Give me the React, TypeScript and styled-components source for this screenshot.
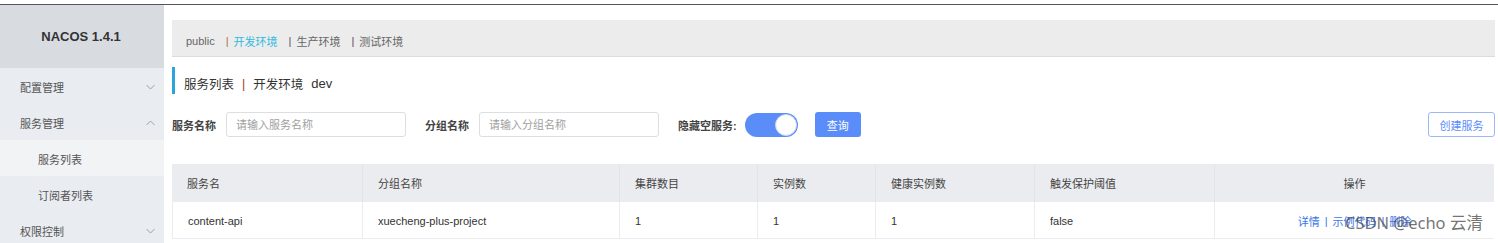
import React from "react";
import styled, { createGlobalStyle } from "styled-components";

const Global = createGlobalStyle`
  html, body { margin: 0; padding: 0; background: #fff; }
  body { font-family: "Liberation Sans", "Noto Sans CJK SC", sans-serif; color: #333; }
  * { box-sizing: border-box; }
`;

const Page = styled.div`
  padding-top: 4px;
  width: 1498px;
  height: 243px;
  overflow: hidden;
  position: relative;
`;

const Frame = styled.div`
  border-top: 1px solid #555;
  display: flex;
  height: 239px;
`;

const Sidebar = styled.aside`
  width: 164px;
  flex: none;
  background: #e9ecf0;
  display: flex;
  flex-direction: column;
`;

const Brand = styled.div`
  height: 63px;
  flex: none;
  background: #d8dce1;
  display: flex;
  align-items: center;
  justify-content: center;
  font-size: 13px;
  font-weight: 700;
  color: #333;
  padding-right: 2px;
  padding-bottom: 1px;
`;

const MenuItem = styled.div<{ $sub?: boolean; $active?: boolean }>`
  height: 36px;
  flex: none;
  display: flex;
  align-items: center;
  justify-content: space-between;
  padding: 1px 9px 0 ${(p) => (p.$sub ? "38px" : "20px")};
  font-size: 11px;
  color: #555;
  background: ${(p) => (p.$active ? "#f2f3f5" : "transparent")};
`;

const Chevron = ({ up }: { up?: boolean }) => (
  <svg width="9" height="6" viewBox="0 0 9 6">
    <path
      d={up ? "M0.5 5 L4.5 1 L8.5 5" : "M0.5 1 L4.5 5 L8.5 1"}
      fill="none"
      stroke="#999"
      strokeWidth="0.9"
    />
  </svg>
);

const Main = styled.main`
  flex: 1;
  padding: 15px 3px 0 8px;
  display: flex;
  flex-direction: column;
`;

const NsBar = styled.div`
  height: 37px;
  flex: none;
  background: #ececec;
  border-bottom: 1px solid #dcdcdc;
  display: flex;
  align-items: center;
  padding-left: 14px;
  padding-top: 5px;
  font-size: 11px;
`;

const NsItem = styled.span<{ $active?: boolean }>`
  color: ${(p) => (p.$active ? "#2dbbe0" : "#666")};
  margin-right: 11px;
`;

const NsSep = styled.span<{ $c: string }>`
  color: ${(p) => p.$c};
  margin-right: 5px;
`;

const TitleRow = styled.div`
  margin-top: 10px;
  height: 27px;
  flex: none;
  border-left: 3px solid #2ca3d9;
  display: flex;
  align-items: center;
  padding-left: 9px;
  padding-top: 6px;
  font-size: 12.5px;
  color: #333;
`;

const TitleSep = styled.span`
  color: #b03030;
  margin: 0 8px 0 8px;
`;

const Dev = styled.span`
  margin-left: 8px;
  font-size: 13px;
`;

const SearchRow = styled.div`
  margin-top: 18px;
  height: 25px;
  flex: none;
  display: flex;
  align-items: center;
`;

const Label = styled.span`
  font-size: 11px;
  font-weight: 700;
  color: #444;
  margin-right: 10px;
`;

const Input = styled.input`
  width: 180px;
  height: 25px;
  border: 1px solid #dcdee3;
  border-radius: 3px;
  padding: 0 9px;
  font-family: inherit;
  font-size: 11px;
  outline: none;
  margin-right: 19px;
  &::placeholder { color: #a0a0a0; }
`;

const Switch = styled.div`
  width: 53px;
  height: 24px;
  border-radius: 12px;
  background: #5b8df8;
  display: flex;
  align-items: center;
  justify-content: flex-end;
  padding-right: 1px;
  margin: 0 17px 0 -2px;
`;

const Knob = styled.div`
  width: 22px;
  height: 22px;
  border-radius: 50%;
  background: #fff;
  border: 1px solid #c9d6f8;
`;

const PrimaryBtn = styled.button`
  width: 46px;
  height: 25px;
  border: none;
  border-radius: 3px;
  background: #5a8cfa;
  color: #fff;
  font-family: inherit;
  font-size: 11px;
  padding: 0;
`;

const Spacer = styled.div`
  flex: 1;
`;

const OutlineBtn = styled.button`
  width: 67px;
  height: 25px;
  border: 1px solid #9db8f8;
  border-radius: 3px;
  background: #fff;
  color: #5a8cfa;
  font-family: inherit;
  font-size: 11px;
  padding: 0;
`;

const Table = styled.div`
  margin-top: 27px;
  width: 1322px;
  display: grid;
  grid-template-columns: 190px 257px 138px 118px 159px 180px 280px;
  font-size: 11px;
`;

const Th = styled.div<{ $center?: boolean }>`
  height: 38px;
  background: #ebecf0;
  border-left: 1px solid #e3e4e8;
  display: flex;
  align-items: center;
  justify-content: ${(p) => (p.$center ? "center" : "flex-start")};
  padding-left: ${(p) => (p.$center ? "0" : "15px")};
  color: #444;
  &:first-child { border-left: none; }
`;

const Td = styled.div<{ $center?: boolean }>`
  height: 37px;
  border-left: 1px solid #ebecf0;
  border-bottom: 1px solid #ebecf0;
  display: flex;
  align-items: center;
  justify-content: ${(p) => (p.$center ? "center" : "flex-start")};
  padding-left: ${(p) => (p.$center ? "0" : "15px")};
  padding-top: 2px;
  color: #333;
`;

const Link = styled.span`
  color: #3a75ea;
`;

const LinkSep = styled.span`
  color: #3a75ea;
  margin: 0 5px;
`;

const Watermark = styled.div`
  position: absolute;
  left: 1345px;
  top: 210px;
  font-family: "Noto Sans", "Noto Sans CJK SC", sans-serif;
  font-size: 16.5px;
  color: rgba(70, 70, 70, 0.75);
  white-space: nowrap;
`;

const headers = ["服务名", "分组名称", "集群数目", "实例数", "健康实例数", "触发保护阈值"];
const row = ["content-api", "xuecheng-plus-project", "1", "1", "1", "false"];

export default function App() {
  return (
    <Page>
      <Global />
      <Frame>
        <Sidebar>
          <Brand>NACOS 1.4.1</Brand>
          <MenuItem>
            配置管理 <Chevron />
          </MenuItem>
          <MenuItem>
            服务管理 <Chevron up />
          </MenuItem>
          <MenuItem $sub $active>
            服务列表
          </MenuItem>
          <MenuItem $sub>订阅者列表</MenuItem>
          <MenuItem>
            权限控制 <Chevron />
          </MenuItem>
        </Sidebar>
        <Main>
          <NsBar>
            <NsItem>public</NsItem>
            <NsSep $c="#a0784a">|</NsSep>
            <NsItem $active>开发环境</NsItem>
            <NsSep $c="#555">|</NsSep>
            <NsItem>生产环境</NsItem>
            <NsSep $c="#6a3a5a">|</NsSep>
            <NsItem>测试环境</NsItem>
          </NsBar>
          <TitleRow>
            服务列表<TitleSep>|</TitleSep>开发环境<Dev>dev</Dev>
          </TitleRow>
          <SearchRow>
            <Label>服务名称</Label>
            <Input placeholder="请输入服务名称" />
            <Label>分组名称</Label>
            <Input placeholder="请输入分组名称" />
            <Label>隐藏空服务:</Label>
            <Switch>
              <Knob />
            </Switch>
            <PrimaryBtn>查询</PrimaryBtn>
            <Spacer />
            <OutlineBtn>创建服务</OutlineBtn>
          </SearchRow>
          <Table>
            {headers.map((h) => (
              <Th key={h}>{h}</Th>
            ))}
            <Th $center>操作</Th>
            {row.map((c, i) => (
              <Td key={i}>{c}</Td>
            ))}
            <Td $center>
              <Link>详情</Link>
              <LinkSep>|</LinkSep>
              <Link>示例代码</Link>
              <LinkSep>|</LinkSep>
              <Link>删除</Link>
            </Td>
          </Table>
        </Main>
      </Frame>
      <Watermark>CSDN @echo 云清</Watermark>
    </Page>
  );
}
